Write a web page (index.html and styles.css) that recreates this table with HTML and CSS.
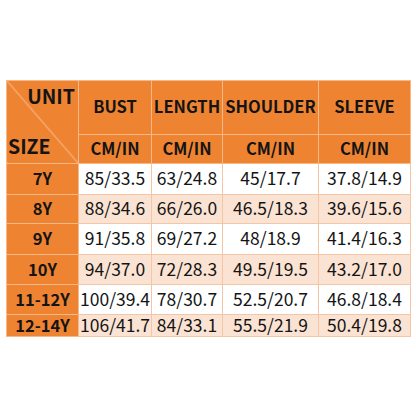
FILE: index.html
```html
<!DOCTYPE html>
<html>
<head>
<meta charset="utf-8">
<link rel="stylesheet" href="styles.css">
</head>
<body>
<div class="page">
<table class="chart">
  <colgroup>
    <col class="c1"><col class="c2"><col class="c3"><col class="c4"><col class="c5">
  </colgroup>
  <tr class="h1">
    <th class="corner" rowspan="2">
      <div class="corner-in">
        <span class="unit">UNIT</span>
        <span class="size">SIZE</span>
      </div>
    </th>
    <th>BUST</th><th>LENGTH</th><th>SHOULDER</th><th>SLEEVE</th>
  </tr>
  <tr class="h2">
    <th>CM/IN</th><th>CM/IN</th><th>CM/IN</th><th>CM/IN</th>
  </tr>
  <tr class="r r1 odd"><th>7Y</th><td>85/33.5</td><td>63/24.8</td><td>45/17.7</td><td>37.8/14.9</td></tr>
  <tr class="r r2 even"><th>8Y</th><td>88/34.6</td><td>66/26.0</td><td>46.5/18.3</td><td>39.6/15.6</td></tr>
  <tr class="r r3 odd"><th>9Y</th><td>91/35.8</td><td>69/27.2</td><td>48/18.9</td><td>41.4/16.3</td></tr>
  <tr class="r r4 even"><th>10Y</th><td>94/37.0</td><td>72/28.3</td><td>49.5/19.5</td><td>43.2/17.0</td></tr>
  <tr class="r r5 odd"><th>11-12Y</th><td>100/39.4</td><td>78/30.7</td><td>52.5/20.7</td><td>46.8/18.4</td></tr>
  <tr class="r r6 even"><th>12-14Y</th><td>106/41.7</td><td>84/33.1</td><td>55.5/21.9</td><td>50.4/19.8</td></tr>
</table>
</div>
</body>
</html>
```
FILE: styles.css
```css
html, body {
  margin: 0;
  padding: 0;
  background: #ffffff;
}
.page {
  padding: 80px 0 0 6px;
}
.chart {
  border-collapse: collapse;
  table-layout: fixed;
  width: 404px;
  font-family: "Noto Sans CJK SC", "Noto Sans", sans-serif;
  font-size: 17.5px;
  color: #141414;
}
.c1 { width: 72px; }
.c2 { width: 73px; }
.c3 { width: 71px; }
.c4 { width: 96px; }
.c5 { width: 92px; }
.chart th, .chart td {
  padding: 0 0 2px 0;
  text-align: center;
  vertical-align: middle;
  line-height: 18px;
  white-space: nowrap;
  border: 1px solid #f6c6a4;
}
.chart th {
  background: #ee8332;
  font-weight: 700;
  font-size: 16.5px;
  border-color: #f5b888;
}
.chart td {
  font-weight: 400;
}
.h1 { height: 53px; }
.h2 { height: 29px; }
.r1 { height: 31px; }
.r2 { height: 29px; }
.r3 { height: 31px; }
.r4 { height: 30px; }
.r5 { height: 30px; }
.r6 { height: 22px; }
.odd td { background: #ffffff; }
.even td { background: #fbe3d3; }
.chart th.corner {
  padding: 0;
  background: linear-gradient(to top right, #ee8332 calc(50% - 0.8px), #f7c9a6 50%, #ee8332 calc(50% + 0.8px));
}
.corner-in {
  height: 82px;
  box-sizing: border-box;
  padding: 6px 3px 8px 1px;
  display: flex;
  flex-direction: column;
  justify-content: space-between;
  font-size: 19.5px;
}
.unit { align-self: flex-end; }
.size { align-self: flex-start; }
```
